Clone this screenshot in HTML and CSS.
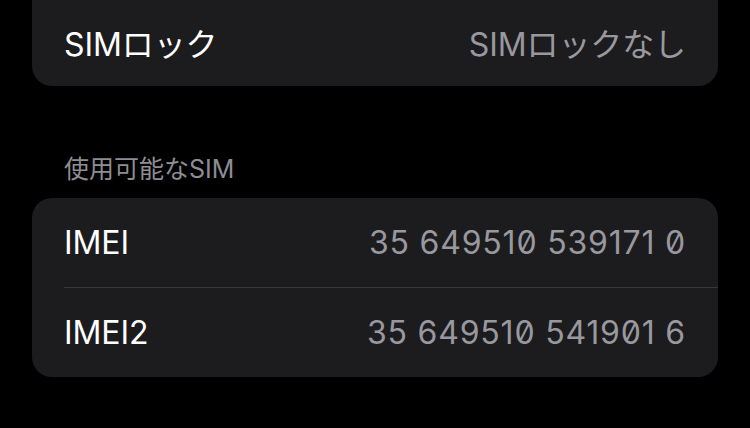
FILE: index.html
```html
<!DOCTYPE html>
<html lang="ja">

<head>
    <meta charset="UTF-8">
    <meta name="viewport" content="width=device-width,initial-scale=1" />
    <title>情報</title>
    <link rel="stylesheet" href="styles.css">
</head>

<body>
    <main class="settings">
        <section class="group group-top">
            <div class="row">
                <span class="label">SIMロック</span>
                <span class="value">SIMロックなし</span>
            </div>
        </section>

        <h2 class="group-title">使用可能なSIM</h2>

        <section class="group">
            <div class="row">
                <span class="label">IMEI</span>
                <span class="value digits">35 649510 539171 0</span>
            </div>
            <div class="row">
                <span class="label">IMEI2</span>
                <span class="value digits">35 649510 541901 6</span>
            </div>
        </section>
    </main>
</body>

</html>
```

FILE: styles.css
```css
html,
body {
    margin: 0;
    background: #000;
}

body {
    font-family: Inter, "Noto Sans CJK JP", sans-serif;
    color: #fff;
    overflow: hidden;
}

.settings {
    padding: 0 32px;
}

.group {
    background: #1c1c1e;
    border-radius: 20px;
    overflow: hidden;
}

.group-top {
    margin-top: -3px;
    border-radius: 0 0 20px 20px;
}

.row {
    display: flex;
    align-items: center;
    justify-content: space-between;
    height: 89px;
    margin-left: 32px;
    padding-right: 32px;
    font-size: 32px;
    letter-spacing: -0.1px;
}

.row + .row {
    border-top: 1px solid #38383a;
}

.label {
    color: #fff;
}

.value {
    color: #98989e;
}

.digits {
    /* slashed zero like the iOS IMEI field */
    font-feature-settings: "zero";
    letter-spacing: 0.8px;
}

.group-title {
    margin: 0;
    padding: 69px 32px 15px;
    line-height: 28px;
    font-size: 25px;
    font-weight: normal;
    color: #8d8d93;
}
```
